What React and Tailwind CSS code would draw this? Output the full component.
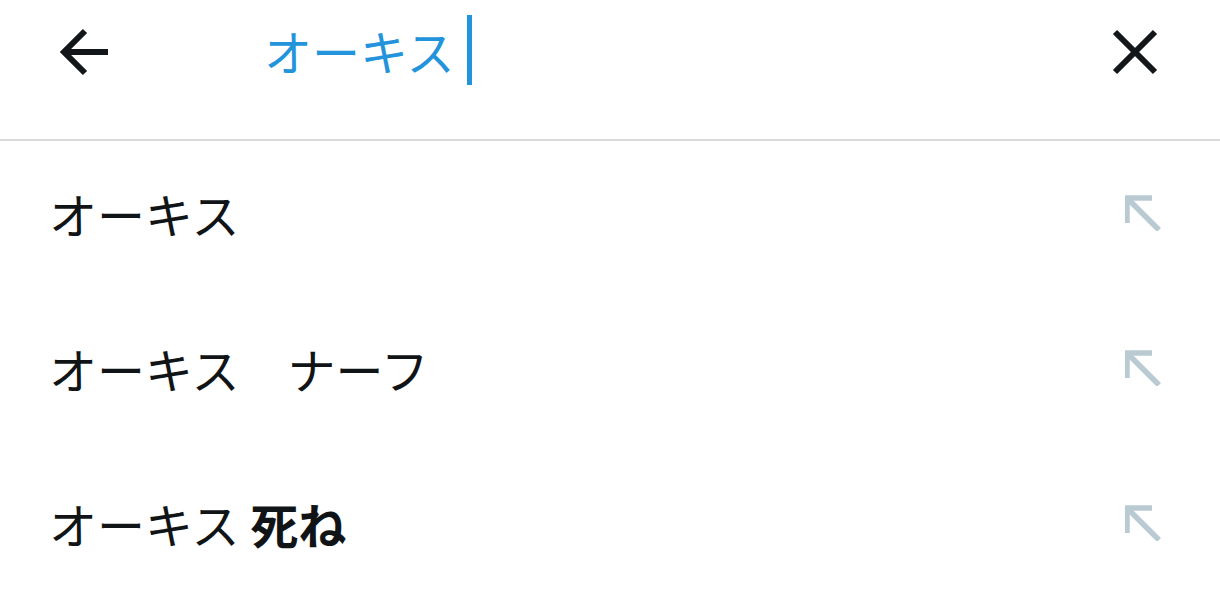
const fontStack = {
  fontFamily: '"Noto Sans CJK JP", "Noto Sans", sans-serif',
};

const BackArrow = () => (
  <svg width="52" height="52" viewBox="0 0 52 52" fill="none" stroke="#14171a" strokeWidth="6">
    <line x1="6" y1="26" x2="50" y2="26" />
    <polyline points="27,5 6,26 27,47" strokeLinejoin="miter" />
  </svg>
);

const CloseIcon = () => (
  <svg width="46" height="46" viewBox="0 0 46 46" fill="none" stroke="#14171a" strokeWidth="6">
    <line x1="3" y1="3" x2="43" y2="43" />
    <line x1="43" y1="3" x2="3" y2="43" />
  </svg>
);

const FillArrow = () => (
  <svg className="mb-[6px]" width="36" height="36" viewBox="0 0 36 36" fill="none" stroke="#b9cad3" strokeWidth="5.5">
    <polyline points="2,28 2,3 27,3" strokeLinejoin="miter" />
    <line x1="3" y1="4" x2="34" y2="35" />
  </svg>
);

const suggestions = [
  { base: "オーキス", rest: null },
  { base: "オーキス　ナーフ", rest: null },
  { base: "オーキス ", rest: "死ね" },
];

export default function App() {
  return (
    <div className="w-[1220px] h-[593px] bg-white overflow-hidden" style={fontStack}>
      <div className="h-[141px] border-b-2 border-[#dadada]">
        <div className="flex items-center h-[104px] pl-[58px] pr-[62px]">
          <BackArrow />
          <div className="flex items-center ml-[154px] mb-[5px] flex-1">
            <span className="text-[48px] text-[#2394dc] leading-none">オーキス</span>
            <span className="ml-[12px] w-[5px] h-[70px] bg-[#2394dc]" />
          </div>
          <CloseIcon />
        </div>
      </div>
      <div>
        {suggestions.map((s, i) => (
          <div key={i} className="flex items-center justify-between h-[155px] pl-[49px] pr-[59px] pb-[6px]">
            <span className="text-[48px] text-[#111416] leading-none whitespace-pre mb-[6px]">
              {s.base}
              {s.rest && <span className="font-bold">{s.rest}</span>}
            </span>
            <FillArrow />
          </div>
        ))}
      </div>
    </div>
  );
}
